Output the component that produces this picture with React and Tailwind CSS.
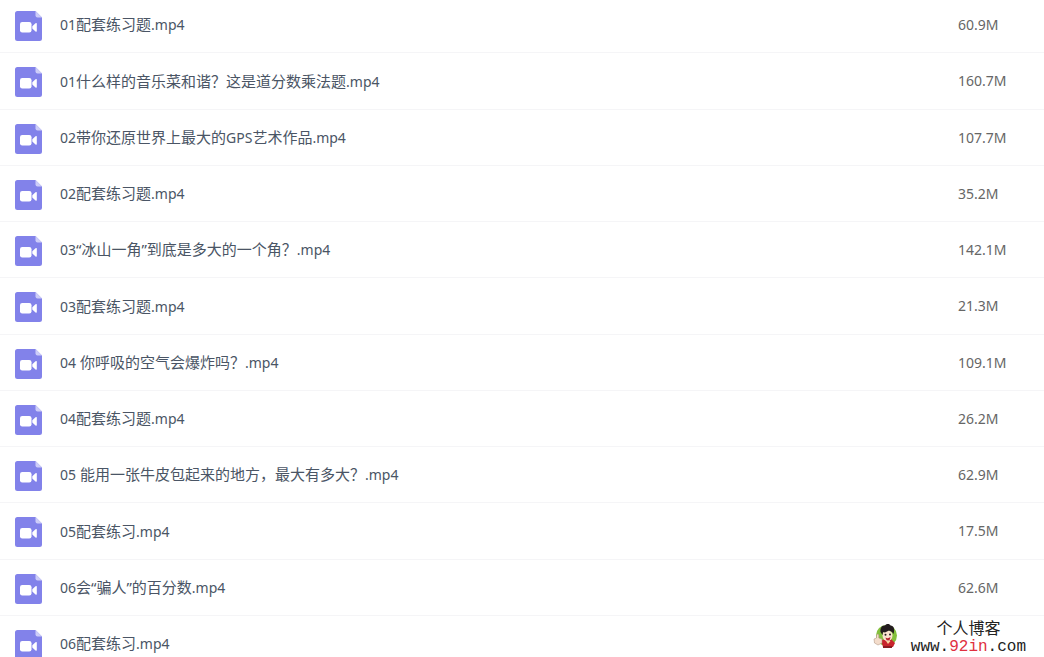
import React from 'react';

const files = [
  { name: '01配套练习题.mp4', size: '60.9M' },
  { name: '01什么样的音乐菜和谐？这是道分数乘法题.mp4', size: '160.7M' },
  { name: '02带你还原世界上最大的GPS艺术作品.mp4', size: '107.7M' },
  { name: '02配套练习题.mp4', size: '35.2M' },
  { name: '03“冰山一角”到底是多大的一个角？.mp4', size: '142.1M' },
  { name: '03配套练习题.mp4', size: '21.3M' },
  { name: '04 你呼吸的空气会爆炸吗？.mp4', size: '109.1M' },
  { name: '04配套练习题.mp4', size: '26.2M' },
  { name: '05 能用一张牛皮包起来的地方，最大有多大？.mp4', size: '62.9M' },
  { name: '05配套练习.mp4', size: '17.5M' },
  { name: '06会“骗人”的百分数.mp4', size: '62.6M' },
  { name: '06配套练习.mp4', size: '' },
];

const VideoFileIcon = () => (
  <svg width="27" height="30" viewBox="0 0 27 30" aria-hidden="true" className="block">
    <path d="M2.5 0H20.5L27 6.5V27.5A2.5 2.5 0 0 1 24.5 30H2.5A2.5 2.5 0 0 1 0 27.5V2.5A2.5 2.5 0 0 1 2.5 0Z" fill="#8282ea" />
    <path d="M20.5 0L27 6.5H22.5A2 2 0 0 1 20.5 4.5Z" fill="#cdcdf8" />
    <rect x="5" y="11" width="11.5" height="10.5" rx="2.2" fill="#fff" />
    <path d="M17.3 15.2L20.5 12.2Q21.8 11.4 21.8 12.8V19.8Q21.8 21.2 20.5 20.4L17.3 17.4Z" fill="#fff" />
  </svg>
);

// Latin runs are set one pixel smaller than the Chinese ones
const FileName = ({ name }) =>
  name.split(/([\w.]+)/).map((part, i) =>
    i % 2 ? <span key={i} className="text-[14px]">{part}</span> : part
  );

const Avatar = () => (
  <svg width="24" height="26" viewBox="0 0 24 26" aria-hidden="true">
    <circle cx="13.5" cy="12.5" r="10.5" fill="#84c03c" />
    <path d="M8 17L18 16L22 20L20 24H10Z" fill="#c8242c" />
    <path d="M10 23H19V25H10Z" fill="#8a1c20" />
    <ellipse cx="14.5" cy="12.5" rx="5" ry="5.5" fill="#fbe3cf" />
    <path d="M7.5 9C7 5 9 2 12 2.5C14 0 17 1 17.5 2.5C21 3 22 6 20.5 11L19 9L16 7.5L12 9.5L10 9L9.5 12Z" fill="#231c1e" />
    <circle cx="12.5" cy="11.8" r="1" fill="#231c1e" />
    <circle cx="17" cy="11.5" r="1" fill="#231c1e" />
    <path d="M12.5 14.5Q15 16 17.5 14Q17 17.5 15 17.5T12.5 14.5Z" fill="#b82430" />
    <path d="M3.5 12Q5 10 5.8 12V15L9 16V20L5 22L1.5 20L1 16L3.5 15Z" fill="#f3dccb" stroke="#a88d78" strokeWidth="0.5" />
    <path d="M13 18L15 21L17.5 18Z" fill="#f7d7a0" />
  </svg>
);

const App = () => {
  return (
    <main className="relative h-screen overflow-hidden bg-white font-['Noto_Sans','Noto_Sans_CJK_SC',sans-serif]">
      <table className="-mt-[3px] w-full table-fixed border-separate border-spacing-0">
        <tbody>
          {files.map(file => (
            <tr key={file.name} className="h-[56px] nth-[4n+2]:h-[57px]">
              <td className="w-[60px] border-b border-[#f5f5f7] p-0 pt-[2px] pl-[15px]">
                <VideoFileIcon />
              </td>
              <td className="border-b border-[#f5f5f7] p-0 text-[15px] leading-5 whitespace-nowrap text-[#4a5565]">
                <FileName name={file.name} />
              </td>
              <td className="w-[87px] border-b border-[#f5f5f7] p-0 pl-px text-[14px] leading-5 text-[#666666]">
                {file.size}
              </td>
            </tr>
          ))}
        </tbody>
      </table>

      {/* Site watermark */}
      <div className="absolute right-[18px] bottom-1 flex items-center gap-[14px] text-[#222222]">
        <Avatar />
        <div className="flex flex-col items-center gap-[6px]">
          <span className="text-[16px] leading-4 font-['Noto_Sans_CJK_SC',sans-serif]">个人博客</span>
          <span className="text-[16px] leading-3 font-['Liberation_Mono',monospace]">
            www.<span className="text-[#e03040]">92in</span>.com
          </span>
        </div>
      </div>
    </main>
  );
};

export default App;
